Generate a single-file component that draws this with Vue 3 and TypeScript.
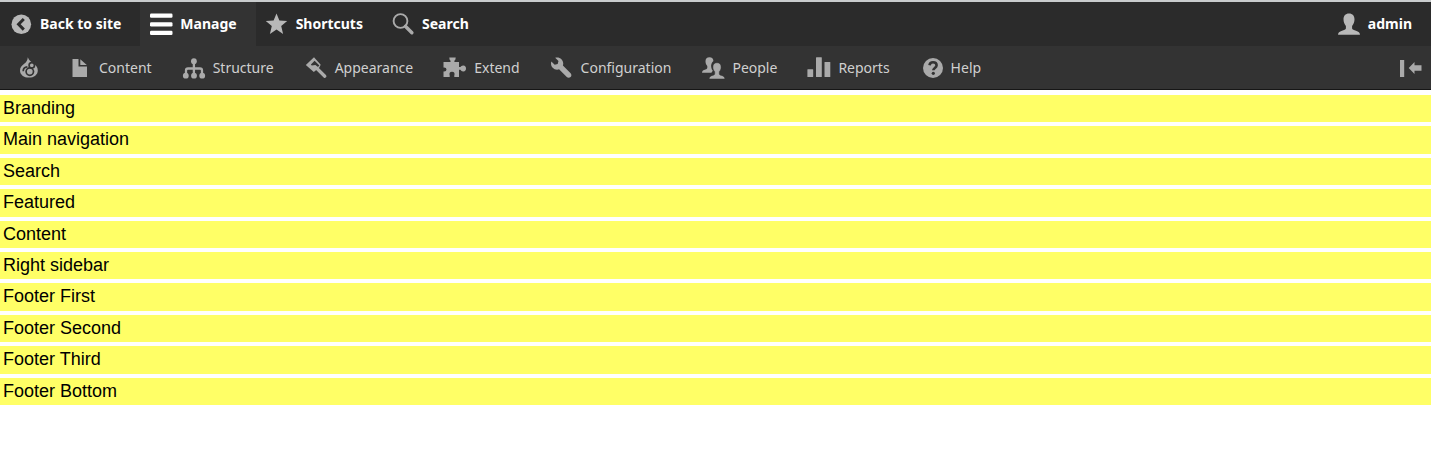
<script setup lang="ts">
type IconName =
  | 'back' | 'menu' | 'star' | 'search' | 'person' | 'drop' | 'file' | 'orgchart'
  | 'brush' | 'puzzle' | 'wrench' | 'people' | 'barchart' | 'help'

interface Item {
  label: string
  icon: IconName
  active?: boolean
}

const tabs: Item[] = [
  { label: 'Back to site', icon: 'back' },
  { label: 'Manage', icon: 'menu', active: true },
  { label: 'Shortcuts', icon: 'star' },
  { label: 'Search', icon: 'search' },
  { label: 'admin', icon: 'person' },
]

const menu: Item[] = [
  { label: '', icon: 'drop' },
  { label: 'Content', icon: 'file' },
  { label: 'Structure', icon: 'orgchart' },
  { label: 'Appearance', icon: 'brush' },
  { label: 'Extend', icon: 'puzzle' },
  { label: 'Configuration', icon: 'wrench' },
  { label: 'People', icon: 'people' },
  { label: 'Reports', icon: 'barchart' },
  { label: 'Help', icon: 'help' },
]

const regions: string[] = [
  'Branding', 'Main navigation', 'Search', 'Featured', 'Content',
  'Right sidebar', 'Footer First', 'Footer Second', 'Footer Third', 'Footer Bottom',
]

/* Inner markup of each icon on a 22 by 22 grid; inner marks take the bar's colour. */
const icons: Record<IconName, string> = {
  back: '<circle cx="11.3" cy="11.3" r="9.8"/><path d="M13.8 6 8.6 11.3l5.2 5.3" fill="none" stroke="#2b2b2b" stroke-width="3"/>',
  menu: '<g fill="#fff"><rect y=".6" width="22.5" height="4.2" rx="1.2"/><rect y="9.2" width="22.5" height="4.2" rx="1.2"/><rect y="17.8" width="22.5" height="4.2" rx="1.2"/></g>',
  star: '<path d="M10.5.5l2.9 7 7.8.5-6 5 1.9 7.9-6.6-4.3-6.6 4.3L5.8 13l-6-5 7.8-.5z"/>',
  search: '<circle cx="8.5" cy="8" r="6.9" fill="none" stroke="#aaa" stroke-width="1.9"/><path d="M13.4 13.2l6.5 6.6" fill="none" stroke="#aaa" stroke-width="3.4" stroke-linecap="round"/>',
  person: '<path d="M11 .5c3.6 0 5.5 2.3 5.5 5.8 0 2.8-1 5.2-2.4 6.6v2.3c0 1.2 1.2 1.7 3.2 2.3 2.7.8 4.5 1.6 4.7 4.2H0c.2-2.6 2-3.4 4.7-4.2 2-.6 3.2-1.1 3.2-2.3v-2.3C6.5 11.5 5.5 9.1 5.5 6.3 5.5 2.8 7.4.5 11 .5z"/>',
  drop: '<path d="M9.8.2c1.1 3 3 4.3 5.2 5.8 2.7 1.9 4.8 4.1 4.8 7.4 0 4.2-3.8 7.2-8.9 7.200S2 17.600 2 13.400c0-3.300 2-5.200 4.500-7C8.300 5.100 9.500 3.400 9.800.2z"/><g fill="none" stroke="#333" stroke-width="1.7"><circle cx="11.8" cy="14.6" r="3.700"/><circle cx="13.8" cy="8.300" r="2.700"/><path d="M9.400 9.800c-2.600.2-4.200 2.200-4.200 4.400"/></g>',
  file: '<path d="M3.5 2h6v7.500H18V20H3.500zM11.3 2.200 17.800 8h-6.500z"/>',
  orgchart: '<path d="M10.900 5v12M3 18v-4.500q0-2 2-2h12q2 0 2 2V18" fill="none" stroke="#aaa" stroke-width="2.300"/><circle cx="10.900" cy="4.200" r="2.900"/><circle cx="2.800" cy="18.700" r="2.900"/><circle cx="11" cy="18.700" r="2.900"/><circle cx="19.200" cy="18.700" r="2.900"/>',
  brush: '<path d="M9 .2 15.700 7.800 14.300 10.600 8.800 15 .8 8zM9.600 3.800 5.900 7.500l.8.900 3.700-.4 2.500 2 1.500-1.400z" fill-rule="evenodd"/><path d="M11.700 11.300l8.100 7.900" fill="none" stroke="#aaa" stroke-width="3.300" stroke-linecap="round"/>',
  puzzle: '<path d="M-.5 5h7V3.700Q5.200 2.900 5.300.5h6.400q.1 2.400-1.300 3.200V5H15v5h1.400q1-1.800 3-1.600 2.600.3 2.600 3t-2.600 3q-2 .2-3-1.600H15V20h-4.700v-1.600q1.100-3.300-2.300-3.600-3.400.3-2.300 3.600V20h-6.200v-5.500q3 .3 3-2t-3-2z"/>',
  wrench: '<path transform="translate(0 .4) scale(1.36)" d="M14.416 11.586 8.750 5.920c.15-.449.252-.921.252-1.421C9.002 2.015 6.986 0 4.500 0c-.505 0-.981.102-1.434.255l2.431 2.431-.588 2.196-2.196.588L.268 3.025C.106 3.489 0 3.981 0 4.500 0 6.986 2.014 9 4.500 9c.5 0 .972-.102 1.421-.251l5.667 5.665c.781.781 2.047.781 2.828 0s.781-2.047 0-2.828z"/>',
  people: '<path d="M7.500.3c2.500 0 3.900 1.500 3.900 3.700-1.800 1.500-2.500 3.600-2.200 5.900.2 1.600.8 2.900 1.600 3.900l-1.400 1.900H0c.1-2.100 1.400-2.800 3.400-3.300 1.300-.4 1.900-.8 1.900-1.700V8.900C4.200 7.900 3.500 6.200 3.500 4.300c0-2.500 1.400-4 4-4z"/><path d="M15 5.700c2.700 0 4.100 1.700 4.100 4.300 0 2-.7 3.700-1.800 4.700v2c0 1 .7 1.300 2.200 1.700 2 .6 3.200 1.300 3.400 3.600H7.100c.2-2.300 1.400-3 3.400-3.600 1.500-.4 2.200-.7 2.200-1.700v-2c-1.100-1-1.800-2.700-1.800-4.700 0-2.600 1.400-4.300 4.100-4.300z" stroke="#333" stroke-width=".5"/>',
  barchart: '<rect x="-.6" y="12.200" width="5.800" height="7.800" rx=".5"/><rect x="8" y=".2" width="5.800" height="19.800" rx=".5"/><rect x="16.500" y="5" width="5.800" height="15" rx=".5"/>',
  help: '<circle cx="12" cy="11" r="10"/><path d="M8.500 8.300c.3-2 1.700-3 3.500-3 2.100 0 3.600 1.200 3.600 3 0 2.600-3.300 2.700-3.300 5" fill="none" stroke="#333" stroke-width="2.600"/><circle cx="12.300" cy="16.300" r="1.600" fill="#333"/>',
}
</script>

<template>
  <div class="page">
    <header class="toolbar">
      <nav class="bar" aria-label="Toolbar">
        <a
          v-for="tab in tabs"
          :key="tab.label"
          href="#"
          class="item tab"
          :class="{ active: tab.active, user: tab.icon === 'person' }"
        >
          <svg class="icon" viewBox="0 0 22 22" aria-hidden="true" v-html="icons[tab.icon]"></svg>
          <span>{{ tab.label }}</span>
        </a>
      </nav>
      <nav class="bar tray" aria-label="Administration menu">
        <a v-for="item in menu" :key="item.icon" href="#" class="item" :class="{ labelled: item.label }">
          <svg class="icon" viewBox="0 0 22 22" aria-hidden="true" v-html="icons[item.icon]"></svg>
          <span v-if="item.label">{{ item.label }}</span>
        </a>
        <button type="button" class="orientation">
          <svg class="icon" viewBox="0 0 22 22" aria-hidden="true">
            <path d="M0 3h4.200v17H0zM8.700 11l5.800-6v3.300h7v5.400h-7V17z" />
          </svg>
        </button>
      </nav>
    </header>
    <main class="regions">
      <div v-for="region in regions" :key="region" class="region">{{ region }}</div>
    </main>
  </div>
</template>

<style>
body {
  margin: 0;
  background: #fff;
}
</style>

<style scoped>
.page {
  font-family: "Liberation Sans", Arial, sans-serif;
  font-size: 18px;
  color: #000;
}
.toolbar {
  border-top: 2px solid #c9cccd;
  background: #2b2b2b;
  font-family: "Noto Sans", "Open Sans", sans-serif;
  font-size: 14px;
  line-height: 20px;
}
.bar {
  display: flex;
  height: 44px;
}
.tray {
  box-sizing: border-box;
  padding-left: 8px;
  background: #333;
  border-bottom: 1px solid #161616;
}
.item {
  display: flex;
  align-items: center;
  gap: 8px;
  padding: 0 19px 0 10px;
  color: #d0d0d0;
  text-decoration: none;
  white-space: nowrap;
}
.labelled {
  padding-right: 21px;
}
.tab {
  color: #fff;
  font-weight: 700;
}
.active {
  background: #333;
}
.user {
  margin-left: auto;
}
.icon {
  flex: none;
  width: 22px;
  height: 22px;
  fill: #aaa;
  overflow: visible;
}
.tab .icon {
  fill: #b8b8b8;
}
.orientation {
  display: flex;
  align-items: center;
  margin-left: auto;
  padding: 0 9px;
  border: 0;
  background: none;
}
.regions {
  display: grid;
  gap: 4px;
  padding-top: 5px;
}
.region {
  padding: 2px 3px;
  line-height: 1.3;
  background: #ff6;
}
</style>
